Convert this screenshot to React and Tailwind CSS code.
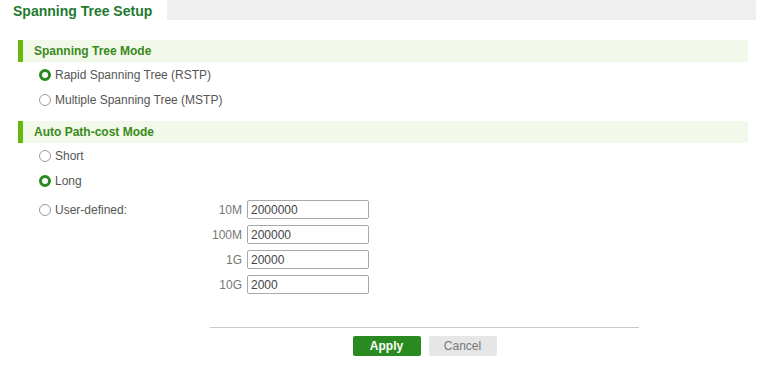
import React, { useState } from "react";

const Radio = ({ checked, label, onClick }) => (
  <label className="flex items-center cursor-pointer" onClick={onClick}>
    {checked ? (
      <span className="w-[12px] h-[12px] rounded-full border-[3px] border-[#2a8a22] bg-white" />
    ) : (
      <span className="w-[12px] h-[12px] rounded-full border border-[#9a9a9a] bg-white" />
    )}
    <span className="ml-[4px] text-[12px] text-[#555]">{label}</span>
  </label>
);

const SectionHeader = ({ title }) => (
  <div className="ml-[18px] mr-[11px] h-[22px] flex items-center bg-[#f2f8ea] border-l-[5px] border-[#66bb0a]">
    <span className="pl-[11px] text-[12px] font-bold text-[#3a8a1c]">{title}</span>
  </div>
);

const App = () => {
  const [mode, setMode] = useState("rstp");
  const [cost, setCost] = useState("long");
  const [values, setValues] = useState({ "10M": "2000000", "100M": "200000", "1G": "20000", "10G": "2000" });

  return (
    <div className="w-[759px] h-[375px] bg-white" style={{ fontFamily: '"Liberation Sans", Arial, sans-serif' }}>
      <div className="flex h-[21px]">
        <div className="w-[167px] pl-[13px] flex items-center">
          <span className="text-[14px] font-bold text-[#1f7a2e] leading-none">Spanning Tree Setup</span>
        </div>
        <div className="flex-1 h-[20px] mr-[3px] bg-[#efefef]" />
      </div>

      <div className="mt-[19px]">
        <SectionHeader title="Spanning Tree Mode" />
        <div className="pl-[39px]">
          <div className="h-[25px] flex items-center">
            <Radio checked={mode === "rstp"} label="Rapid Spanning Tree (RSTP)" onClick={() => setMode("rstp")} />
          </div>
          <div className="h-[25px] flex items-center">
            <Radio checked={mode === "mstp"} label="Multiple Spanning Tree (MSTP)" onClick={() => setMode("mstp")} />
          </div>
        </div>
      </div>

      <div className="mt-[9px]">
        <SectionHeader title="Auto Path-cost Mode" />
        <div className="pl-[39px]">
          <div className="h-[25px] flex items-center">
            <Radio checked={cost === "short"} label="Short" onClick={() => setCost("short")} />
          </div>
          <div className="h-[25px] flex items-center">
            <Radio checked={cost === "long"} label="Long" onClick={() => setCost("long")} />
          </div>
          <div className="flex pt-[7px]">
            <div className="w-[160px] h-[19px] flex items-center">
              <Radio checked={cost === "user"} label="User-defined:" onClick={() => setCost("user")} />
            </div>
            <div className="flex flex-col gap-[6px]">
              {Object.keys(values).map((k) => (
                <div key={k} className="flex items-center">
                  <span className="w-[48px] pr-[5px] text-right text-[12px] text-[#777]">{k}</span>
                  <input
                    className="w-[122px] h-[19px] border border-[#a8a8a8] rounded-[2px] px-[3px] text-[12px] text-[#444] outline-none"
                    value={values[k]}
                    onChange={(e) => setValues({ ...values, [k]: e.target.value })}
                  />
                </div>
              ))}
            </div>
          </div>
        </div>
      </div>

      <div className="ml-[210px] w-[429px] mt-[33px]">
        <div className="border-t border-[#c8c8c8]" />
        <div className="flex justify-center gap-[8px] mt-[8px]">
          <button className="w-[68px] h-[20px] bg-[#2a8a22] text-white text-[12px] font-bold rounded-[2px]">Apply</button>
          <button className="w-[68px] h-[20px] bg-[#e6e6e6] text-[#777] text-[12px] rounded-[2px]">Cancel</button>
        </div>
      </div>
    </div>
  );
};

export default App;
